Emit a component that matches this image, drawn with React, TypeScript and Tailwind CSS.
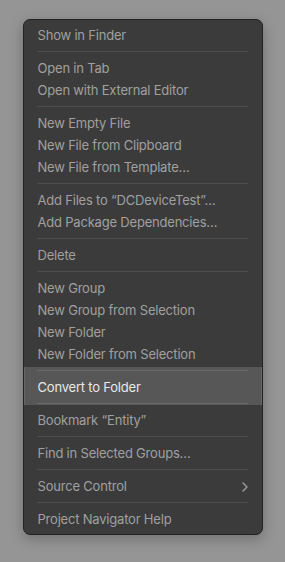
import { ChevronRight } from "lucide-react";

const groups: string[][] = [
  ["Show in Finder"],
  ["Open in Tab", "Open with External Editor"],
  ["New Empty File", "New File from Clipboard", "New File from Template…"],
  ["Add Files to \u201CDCDeviceTest\u201D…", "Add Package Dependencies…"],
  ["Delete"],
  ["New Group", "New Group from Selection", "New Folder", "New Folder from Selection"],
];

const tail: string[][] = [["Bookmark \u201CEntity\u201D"], ["Find in Selected Groups…"]];

function Item({ label, submenu }: { label: string; submenu?: boolean }) {
  return (
    <div className="flex h-[22px] items-center justify-between pt-[2px] pl-[14px] pr-[9px] text-[13px] tracking-[-0.2px] text-[#a0a0a0]">
      <span>{label}</span>
      {submenu && <ChevronRight className="h-4 w-4 text-[#9a9a9a]" strokeWidth={2.2} />}
    </div>
  );
}

function Separator() {
  return (
    <div className="flex h-[11px] items-center pl-[13px] pr-[14px]">
      <div className="h-px w-full bg-[#4d4d4d]" />
    </div>
  );
}

export default function App() {
  return (
    <div
      className="flex h-[562px] w-[285px] items-start justify-center bg-[#959595] pt-[19px]"
      style={{ fontFamily: "Inter, 'Noto Sans', sans-serif" }}
    >
      <div className="w-[240px] overflow-hidden rounded-[7px] border border-[#232323] bg-[#3b3b3b] pt-[4px] pb-[4px] shadow-[0_4px_14px_rgba(0,0,0,0.25)]">
        {groups.map((g, i) => (
          <div key={i}>
            {i > 0 && <Separator />}
            {g.map((l) => (
              <Item key={l} label={l} />
            ))}
          </div>
        ))}

        {/* highlighted row spans into the neighbouring separators */}
        <div className="h-[2px]" />
        <div className="border-x border-[#666] bg-[#575757]">
          <div className="h-[9px] pt-[3px] pl-[12px] pr-[13px]">
            <div className="h-px w-full bg-[#6a6a6a]" />
          </div>
          <div className="flex h-[22px] items-center pt-[2px] pl-[13px] text-[13px] tracking-[-0.2px] text-[#e8e8e8]">
            Convert to Folder
          </div>
          <div className="h-[7px] pt-[5px] pl-[12px] pr-[13px]">
            <div className="h-px w-full bg-[#6a6a6a]" />
          </div>
        </div>
        <div className="h-[4px]" />

        {tail.map((g, i) => (
          <div key={i}>
            {i > 0 && <Separator />}
            {g.map((l) => (
              <Item key={l} label={l} />
            ))}
          </div>
        ))}
        <Separator />
        <Item label="Source Control" submenu />
        <Separator />
        <Item label="Project Navigator Help" />
      </div>
    </div>
  );
}
